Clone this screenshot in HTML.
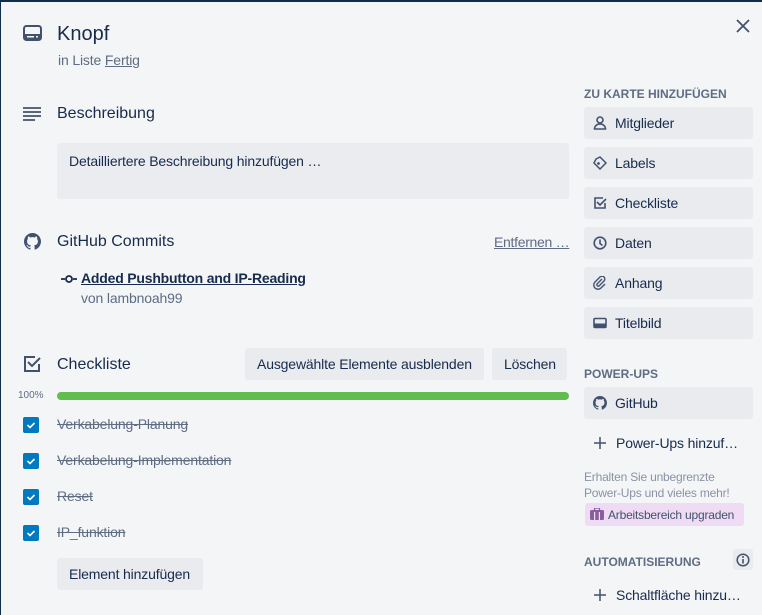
<!DOCTYPE html>
<html><head><meta charset="utf-8"><style>
*{box-sizing:border-box;margin:0;padding:0}
body{width:762px;height:615px;overflow:hidden;background:#0c2f4d;font-family:"Liberation Sans",sans-serif;color:#172b4d;position:relative}
#card{position:absolute;left:0;top:0;right:0;bottom:0;background:#f4f5f7}
.a{position:absolute;white-space:nowrap}
.h{font-size:16px;color:#172b4d}
.btn{position:absolute;background:#e9ebee;border-radius:3px;font-size:14px;color:#172b4d;display:flex;align-items:center;letter-spacing:-.15px}
.sb{left:584px;width:169px;height:32px;padding-left:31px}
.sb svg{position:absolute;left:9px;top:9px}
.lbl{font-size:12px;font-weight:bold;color:#5e6c84;letter-spacing:0}
.cb{position:absolute;left:23px;width:16px;height:16px;background:#0079bf;border-radius:2px}
.cb svg{position:absolute;left:3px;top:3px}
.it{position:absolute;left:57px;font-size:14px;color:#5e6c84;text-decoration:line-through;letter-spacing:-.15px}
.t14{font-size:14px;letter-spacing:-.15px}
</style></head><body><div id="card">
<div class="a" style="left:0;top:0;width:762px;height:2px;background:#0c2f4d"></div>
<div class="a" style="left:0;top:0;width:1px;height:615px;background:#0c2f4d"></div>
<!-- header -->
<svg class="a" style="left:23px;top:25px" width="19" height="16" viewBox="0 0 19 16"><rect x="1" y="1" width="17" height="14" rx="2.5" fill="none" stroke="#42526e" stroke-width="2"/><rect x="2" y="9" width="15" height="5" fill="#42526e"/><rect x="4" y="11" width="7" height="1.5" fill="#f4f5f7"/><rect x="13" y="11" width="2" height="1.5" fill="#f4f5f7"/></svg>
<div class="a" style="left:57px;top:23px;font-size:20px;font-weight:500">Knopf</div>
<div class="a t14" style="left:58px;top:52px;color:#5e6c84">in Liste <span style="text-decoration:underline">Fertig</span></div>
<svg class="a" style="left:736px;top:19px" width="14" height="14" viewBox="0 0 14 14"><path d="M1 1L13 13M13 1L1 13" stroke="#42526e" stroke-width="1.8"/></svg>
<!-- desc -->
<svg class="a" style="left:23px;top:107px" width="18" height="14" viewBox="0 0 18 14"><path d="M0 1h18M0 5h18M0 9h18M0 13h12" stroke="#42526e" stroke-width="1.8"/></svg>
<div class="a h" style="left:57px;top:105px">Beschreibung</div>
<div class="a" style="left:57px;top:143px;width:512px;height:56px;background:#eaecf0;border-radius:3px"></div>
<div class="a t14" style="left:69px;top:153px">Detailliertere Beschreibung hinzufügen …</div>
<!-- github -->
<svg class="a" style="left:24px;top:233px" width="17" height="17" viewBox="0 0 16 16"><path fill="#42526e" d="M8 0C3.58 0 0 3.58 0 8c0 3.54 2.29 6.53 5.47 7.590.4.07.55-.17.55-.38v-1.33c-2.23.48-2.7-1.07-2.7-1.07-.36-.92-.89-1.17-.89-1.17-.73-.5.05-.49.05-.49.8.06 1.23.83 1.23.83.72 1.23 1.87.87 2.33.67.07-.52.28-.87.5-1.07-1.78-.2-3.64-.89-3.64-3.95 0-.87.31-1.59.82-2.15-.08-.2-.36-1.02.08-2.12 0 0 .67-.21 2.2.82a7.6 7.6 0 0 1 4 0c1.53-1.04 2.2-.82 2.2-.82.44 1.1.16 1.92.08 2.12.51.56.82 1.27.82 2.15 0 3.07-1.87 3.75-3.65 3.95.29.25.54.73.54 1.48v2.2c0 .21.15.46.55.38A8 8 0 0 0 16 8c0-4.42-3.58-8-8-8z"/></svg>
<div class="a h" style="left:57px;top:233px">GitHub Commits</div>
<div class="a t14" style="left:494px;top:234px;color:#5e6c84;text-decoration:underline;letter-spacing:-.3px">Entfernen …</div>
<svg class="a" style="left:61px;top:274px" width="16" height="10" viewBox="0 0 16 10"><path d="M0 5h4M12 5h4" stroke="#172b4d" stroke-width="1.8"/><circle cx="8" cy="5" r="3" fill="none" stroke="#172b4d" stroke-width="1.8"/></svg>
<div class="a t14" style="left:81px;top:270px;font-weight:bold;text-decoration:underline;letter-spacing:-.2px">Added Pushbutton and IP-Reading</div>
<div class="a t14" style="left:81px;top:290px;color:#5e6c84">von lambnoah99</div>
<!-- checklist -->
<svg class="a" style="left:23px;top:355px" width="18" height="18" viewBox="0 0 18 18"><path d="M16 9v7H2V2h10" fill="none" stroke="#42526e" stroke-width="2"/><path d="M5 7l4 4 8-8" fill="none" stroke="#42526e" stroke-width="2"/></svg>
<div class="a h" style="left:57px;top:356px">Checkliste</div>
<div class="btn" style="left:245px;top:348px;width:239px;height:32px;padding-left:12px">Ausgewählte Elemente ausblenden</div>
<div class="btn" style="left:492px;top:348px;width:75px;height:32px;padding-left:12px">Löschen</div>
<div class="a" style="left:18px;top:390px;font-size:10px;color:#5e6c84">100%</div>
<div class="a" style="left:57px;top:392px;width:512px;height:8px;border-radius:4px;background:#61bd4f"></div>
<div class="cb" style="top:417px"><svg width="10" height="10" viewBox="0 0 10 10"><path d="M1.5 5l2.5 2.5 4.5-4.5" fill="none" stroke="#fff" stroke-width="1.6"/></svg></div>
<div class="it" style="top:416px">Verkabelung-Planung</div>
<div class="cb" style="top:453px"><svg width="10" height="10" viewBox="0 0 10 10"><path d="M1.5 5l2.5 2.5 4.5-4.5" fill="none" stroke="#fff" stroke-width="1.6"/></svg></div>
<div class="it" style="top:452px">Verkabelung-Implementation</div>
<div class="cb" style="top:489px"><svg width="10" height="10" viewBox="0 0 10 10"><path d="M1.5 5l2.5 2.5 4.5-4.5" fill="none" stroke="#fff" stroke-width="1.6"/></svg></div>
<div class="it" style="top:488px">Reset</div>
<div class="cb" style="top:525px"><svg width="10" height="10" viewBox="0 0 10 10"><path d="M1.5 5l2.5 2.5 4.5-4.5" fill="none" stroke="#fff" stroke-width="1.6"/></svg></div>
<div class="it" style="top:524px">IP_funktion</div>
<div class="btn" style="left:57px;top:558px;width:146px;height:32px;padding-left:12px">Element hinzufügen</div>
<!-- sidebar -->
<div class="a lbl" style="left:584px;top:87px">ZU KARTE HINZUFÜGEN</div>
<div class="btn sb" style="top:107px"><svg width="14" height="14" viewBox="0 0 14 14"><circle cx="7" cy="4" r="3" fill="none" stroke="#42526e" stroke-width="1.6"/><path d="M1.5 13c0-3 2.5-5 5.5-5s5.5 2 5.5 5z" fill="none" stroke="#42526e" stroke-width="1.6"/></svg>Mitglieder</div>
<div class="btn sb" style="top:147px"><svg width="14" height="14" viewBox="0 0 14 14"><path d="M7 1l6 6-6 6-6-6 2-4z" fill="none" stroke="#42526e" stroke-width="1.5"/><circle cx="5.5" cy="7.5" r="1.4" fill="#42526e"/></svg>Labels</div>
<div class="btn sb" style="top:187px"><svg width="14" height="14" viewBox="0 0 14 14"><path d="M12 7v5H2V2h8" fill="none" stroke="#42526e" stroke-width="1.6"/><path d="M4 6l3 3 6-6" fill="none" stroke="#42526e" stroke-width="1.6"/></svg>Checkliste</div>
<div class="btn sb" style="top:227px"><svg width="14" height="14" viewBox="0 0 14 14"><circle cx="7" cy="7" r="5.8" fill="none" stroke="#42526e" stroke-width="1.6"/><path d="M7 3.5V7.5l2.5 2" fill="none" stroke="#42526e" stroke-width="1.6"/></svg>Daten</div>
<div class="btn sb" style="top:267px"><svg width="14" height="14" viewBox="0 0 14 14"><path d="M9 3L4 8a1.5 1.5 0 0 0 2 2l5-5a2.8 2.8 0 0 0-4-4L2 6a4 4 0 0 0 6 6l4-4" fill="none" stroke="#42526e" stroke-width="1.4"/></svg>Anhang</div>
<div class="btn sb" style="top:307px"><svg width="14" height="14" viewBox="0 0 14 14"><rect x="1" y="2.5" width="12" height="9" rx="1" fill="none" stroke="#42526e" stroke-width="1.6"/><rect x="1" y="7.5" width="12" height="4" fill="#42526e"/></svg>Titelbild</div>
<div class="a lbl" style="left:584px;top:367px">POWER-UPS</div>
<div class="btn sb" style="top:387px"><svg width="14" height="14" viewBox="0 0 16 16"><path fill="#42526e" d="M8 0C3.58 0 0 3.58 0 8c0 3.54 2.29 6.53 5.47 7.59.4.07.55-.17.55-.38v-1.33c-2.23.48-2.7-1.07-2.7-1.07-.36-.92-.89-1.17-.89-1.17-.73-.5.05-.49.05-.49.8.06 1.23.83 1.23.83.72 1.23 1.87.87 2.33.67.07-.52.28-.87.5-1.07-1.78-.2-3.64-.89-3.64-3.95 0-.87.31-1.59.82-2.15-.08-.2-.36-1.02.08-2.12 0 0 .67-.21 2.2.82a7.6 7.6 0 0 1 4 0c1.53-1.04 2.2-.82 2.2-.82.44 1.1.16 1.92.08 2.12.51.56.82 1.27.82 2.15 0 3.07-1.87 3.75-3.65 3.95.29.25.54.73.54 1.48v2.2c0 .21.15.46.55.38A8 8 0 0 0 16 8c0-4.42-3.58-8-8-8z"/></svg>GitHub</div>
<svg class="a" style="left:594px;top:437px" width="12" height="12" viewBox="0 0 12 12"><path d="M6 0v12M0 6h12" stroke="#42526e" stroke-width="1.5"/></svg>
<div class="a t14" style="left:616px;top:435px">Power-Ups hinzuf…</div>
<div class="a" style="left:584px;top:469px;font-size:12px;color:#8993a4;line-height:16px;letter-spacing:-.2px">Erhalten Sie unbegrenzte<br>Power-Ups und vieles mehr!</div>
<div class="a" style="left:585px;top:503px;width:159px;height:23px;background:#efdbf3;border-radius:3px"></div>
<svg class="a" style="left:590px;top:508px" width="14" height="12" viewBox="0 0 14 12"><rect x="0" y="2" width="14" height="10" rx="1.5" fill="#89609e"/><rect x="4.5" y="0" width="5" height="3" fill="none" stroke="#89609e" stroke-width="1.3"/><rect x="4" y="4" width="1.2" height="8" fill="#efdbf3"/><rect x="8.8" y="4" width="1.2" height="8" fill="#efdbf3"/></svg>
<div class="a" style="left:608px;top:508px;font-size:12px;color:#42526e;letter-spacing:-.2px">Arbeitsbereich upgraden</div>
<div class="a lbl" style="left:584px;top:555px">AUTOMATISIERUNG</div>
<div class="a" style="left:733px;top:549px;width:20px;height:21px;background:#e9ebee;border-radius:3px"></div>
<svg class="a" style="left:736px;top:553px" width="14" height="14" viewBox="0 0 14 14"><circle cx="7" cy="7" r="5.8" fill="none" stroke="#42526e" stroke-width="1.5"/><path d="M7 6v4.5" stroke="#42526e" stroke-width="1.6"/><circle cx="7" cy="4" r="1" fill="#42526e"/></svg>
<svg class="a" style="left:594px;top:589px" width="12" height="12" viewBox="0 0 12 12"><path d="M6 0v12M0 6h12" stroke="#42526e" stroke-width="1.5"/></svg>
<div class="a t14" style="left:616px;top:587px">Schaltfläche hinzu…</div>
</div></body></html>
